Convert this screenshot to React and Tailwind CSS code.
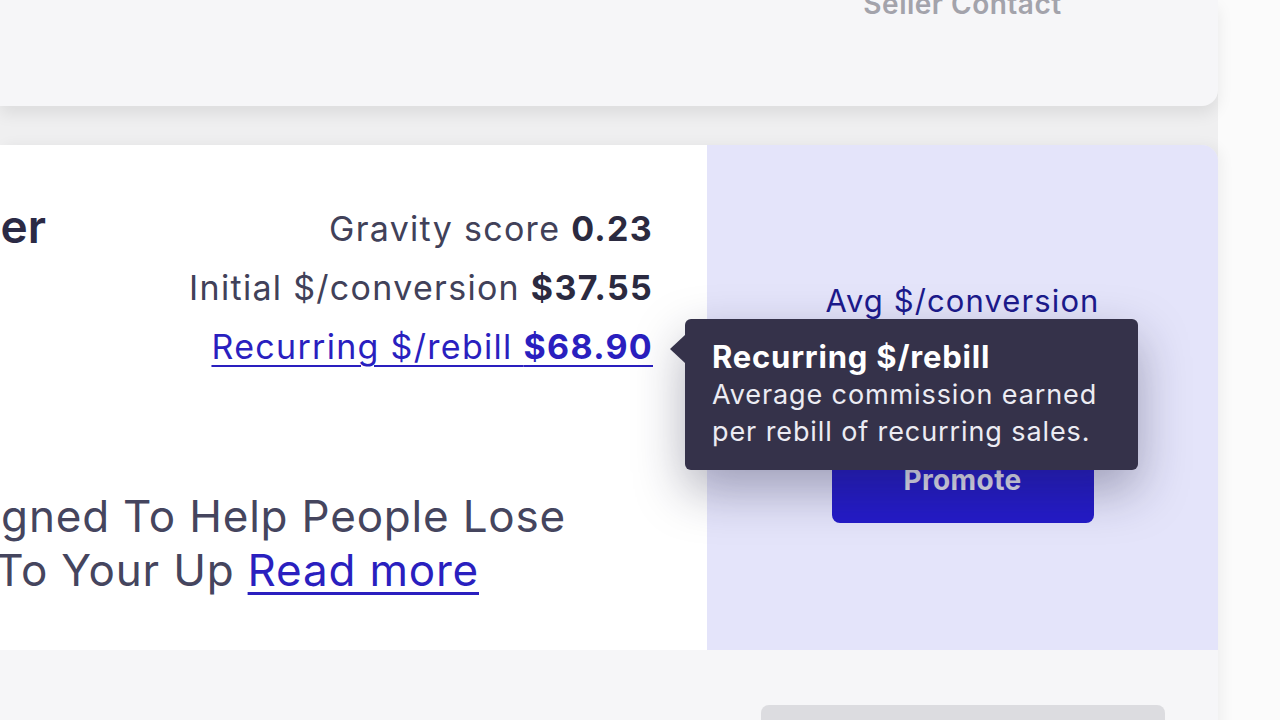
import React from 'react'

const Tooltip = () => {
  return (
    <div className="absolute left-[calc(100%+32px)] top-[2px] z-20 w-[453px] h-[151px] rounded-md bg-[#35324a] pl-[27px] pt-[19px] shadow-[0_20px_50px_rgba(30,30,60,0.35)] font-normal no-underline tracking-normal">
      {/* arrow */}
      <div className="absolute left-[-15px] top-[16px] w-0 h-0 border-y-[14px] border-y-transparent border-r-[15px] border-r-[#35324a]" />
      <p className="text-[31px] leading-[38px] font-bold tracking-[0.8px] text-white">Recurring $/rebill</p>
      <p className="text-[27px] leading-[37px] tracking-[0.9px] text-[#ececf3]">
        Average commission earned<br />per rebill of recurring sales.
      </p>
    </div>
  )
}

const App = () => {
  return (
    <div className="w-[1280px] h-[720px] overflow-hidden flex bg-[#fbfbfb] font-['Inter',sans-serif]">
      <div className="w-[1218px] shrink-0 flex flex-col gap-[39px] bg-[#efeff0]">

        {/* top card */}
        <div className="h-[106px] shrink-0 flex bg-[#f6f6f8] rounded-br-2xl shadow-[0_8px_16px_rgba(0,0,0,0.08)]">
          <div className="flex-1" />
          <div className="w-[511px] flex justify-center">
            <p className="mt-[-17px] text-[28px] font-semibold tracking-[0.5px] text-[#a3a3ab]">Seller Contact</p>
          </div>
        </div>

        {/* offer card */}
        <div className="flex-1 flex flex-col rounded-tr-2xl shadow-[4px_0_14px_rgba(0,0,0,0.05)]">
          <div className="h-[505px] shrink-0 flex">
            <div className="flex-1 bg-white flex flex-col pt-[54px]">
              <div className="flex justify-between">
                <div className="w-[46px] flex justify-end">
                  <h2 className="shrink-0 whitespace-nowrap -mt-[3px] text-[46px] leading-[60px] font-semibold text-[#2b2a45]">Fat Burner</h2>
                </div>
                <div className="pr-[54px] flex flex-col items-end text-[34px] leading-[59px] tracking-[1.3px] text-[#414159]">
                  <p>Gravity score <span className="font-bold text-[#2b2a40]">0.23</span></p>
                  <p>Initial $/conversion <span className="font-bold text-[#2b2a40]">$37.55</span></p>
                  <p className="relative text-[#2a1fbf] underline decoration-2 underline-offset-[6px]">
                    Recurring $/rebill <span className="font-bold">$68.90</span>
                    <Tooltip />
                  </p>
                </div>
              </div>
              <div className="mt-[113px] flex flex-col text-[44px] leading-[54px] tracking-[0.8px] text-[#45455e]">
                <div className="w-[566px] flex justify-end">
                  <p className="shrink-0 whitespace-nowrap">Supplement Designed To Help People Lose</p>
                </div>
                <div className="w-[479px] flex justify-end">
                  <p className="shrink-0 whitespace-nowrap">
                    Weight And Get Back To Your Up{' '}
                    <a className="text-[#2a1fbf] underline decoration-[3px] underline-offset-[6px]">Read more</a>
                  </p>
                </div>
              </div>
            </div>

            <div className="w-[511px] bg-[#e4e4fa] rounded-tr-2xl flex flex-col items-center pt-[134px]">
              <p className="text-[31px] leading-[44px] tracking-[1.1px] text-[#1c1a8c]">Avg $/conversion</p>
              <button className="mt-[114px] w-[262px] h-[86px] rounded-lg bg-[#241bc8] text-[28px] font-bold tracking-[0.4px] text-[#e6e6f3]">Promote</button>
            </div>
          </div>

          {/* footer */}
          <div className="flex-1 flex bg-[#f6f6f8]">
            <div className="flex-1" />
            <div className="w-[511px] flex justify-center pt-[55px]">
              <div className="w-[404px] h-[40px] rounded-lg bg-[#dcdce0]" />
            </div>
          </div>
        </div>
      </div>
    </div>
  )
}

export default App
